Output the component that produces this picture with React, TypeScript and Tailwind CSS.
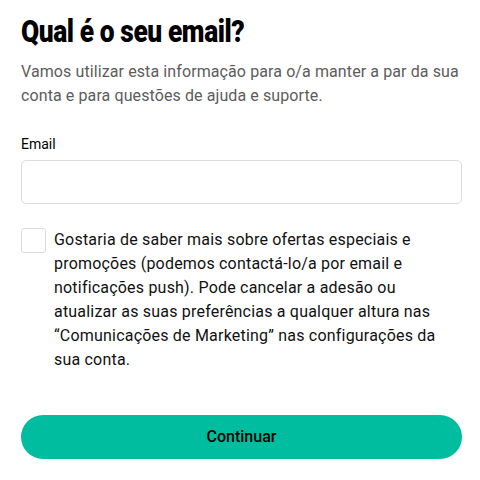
export default function App() {
  return (
    <div className="min-h-screen bg-white pl-[21px] pr-[18px] pt-[12px] font-['Roboto',sans-serif] text-black">
      <h1 className="h-[40px] text-[31px] font-black leading-[40px] text-black">
        <span className="inline-block origin-left scale-x-[0.85] whitespace-nowrap tracking-[-0.5px]">
          Qual é o seu email?
        </span>
      </h1>
      <p className="mt-[8px] text-[16px] leading-[24px] tracking-[0.1px] text-[#5c5c5c]">
        Vamos utilizar esta informação para o/a manter a par da sua conta e para questões de ajuda e suporte.
      </p>

      <label className="mt-[26px] block text-[14px] leading-[20px] text-black">Email</label>
      <input
        type="email"
        className="mt-[6px] block h-[44px] w-full rounded-[5px] border border-[#dcdcdc] px-3 outline-none"
      />

      <div className="mt-[24px] flex gap-[8px]">
        <div className="h-[25px] w-[25px] shrink-0 rounded-[3px] border border-[#dcdcdc]" />
        <p className="text-[16px] leading-[24px] tracking-[0.2px] text-[#111]">
          Gostaria de saber mais sobre ofertas especiais e promoções (podemos contactá-lo/a por email e
          notificações push). Pode cancelar a adesão ou atualizar as suas preferências a qualquer altura nas
          “Comunicações de Marketing” nas configurações da sua conta.
        </p>
      </div>

      <button className="mt-[43px] flex h-[44px] w-full items-center justify-center rounded-full bg-[#00bd9f] text-[16px] font-medium text-black">
        Continuar
      </button>
    </div>
  );
}
